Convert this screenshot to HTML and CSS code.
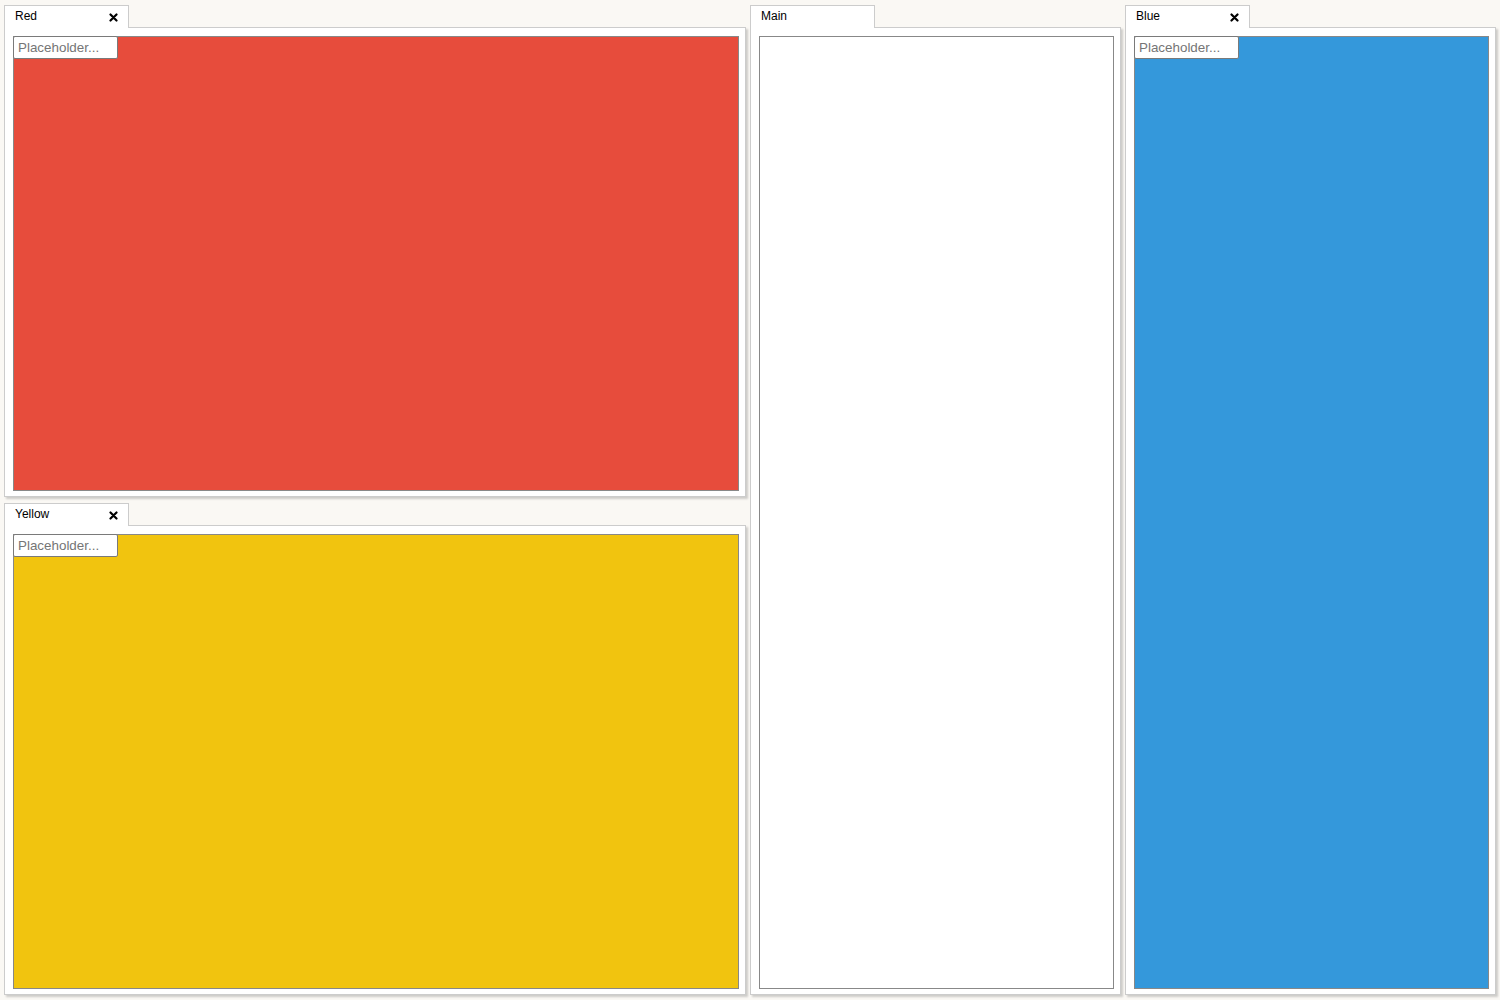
FILE: index.html
```html
<!DOCTYPE html>
<html>
<head>
<meta charset="utf-8">
<link rel="stylesheet" href="styles.css">
</head>
<body>
<div class="layout">
  <div class="col col-left">
    <div class="stack">
      <div class="tabs"><div class="tab"><span class="tab-title">Red</span><span class="close"><svg width="9" height="9" viewBox="0 0 9 9"><path d="M1.5 1.5L7.5 7.5M7.5 1.5L1.5 7.5" stroke="#000" stroke-width="2.2" stroke-linecap="round"/></svg></span></div></div>
      <div class="panel"><div class="box red"><input class="field" placeholder="Placeholder..."></div></div>
    </div>
    <div class="stack">
      <div class="tabs"><div class="tab"><span class="tab-title">Yellow</span><span class="close"><svg width="9" height="9" viewBox="0 0 9 9"><path d="M1.5 1.5L7.5 7.5M7.5 1.5L1.5 7.5" stroke="#000" stroke-width="2.2" stroke-linecap="round"/></svg></span></div></div>
      <div class="panel"><div class="box yellow"><input class="field" placeholder="Placeholder..."></div></div>
    </div>
  </div>
  <div class="col col-mid">
    <div class="stack">
      <div class="tabs"><div class="tab"><span class="tab-title">Main</span></div></div>
      <div class="panel"><div class="box white"></div></div>
    </div>
  </div>
  <div class="col col-right">
    <div class="stack">
      <div class="tabs"><div class="tab"><span class="tab-title">Blue</span><span class="close"><svg width="9" height="9" viewBox="0 0 9 9"><path d="M1.5 1.5L7.5 7.5M7.5 1.5L1.5 7.5" stroke="#000" stroke-width="2.2" stroke-linecap="round"/></svg></span></div></div>
      <div class="panel"><div class="box blue"><input class="field" placeholder="Placeholder..."></div></div>
    </div>
  </div>
</div>
</body>
</html>
```

FILE: styles.css
```css
* { box-sizing: border-box; }
html, body { margin: 0; padding: 0; background: #faf8f4; }
body { width: 1500px; height: 1000px; overflow: hidden; font-family: "Liberation Sans", Arial, sans-serif; }
.layout {
  display: flex;
  gap: 4px;
  padding: 5px 4px 0 4px;
  height: 1000px;
}
.col { display: flex; flex-direction: column; gap: 6px; }
.col-left { width: 742px; }
.col-mid { width: 371px; }
.col-right { width: 371px; }
.col-left .stack { height: 492px; }
.col-mid .stack, .col-right .stack { height: 990px; }
.stack { display: flex; flex-direction: column; }
.tabs { height: 22px; display: flex; position: relative; z-index: 1; }
.tab {
  width: 125px;
  height: 23px;
  background: #fff;
  border: 1px solid #cccccc;
  border-bottom: none;
  display: flex;
  align-items: flex-start;
  justify-content: space-between;
  padding: 3px 10px 0 10px;
  font-size: 12px;
  color: #000;
}
.tab-title { line-height: 14px; }
.close { display: flex; margin-top: 4px; }
.panel {
  flex: 1;
  background: #fff;
  border: 1px solid #cccccc;
  box-shadow: 2px 2px 2px rgba(0,0,0,0.18);
  padding: 8px 6px 5px 8px;
  display: flex;
}
.box {
  flex: 1;
  border: 1px solid #888;
}
.red { background: #e74c3c; }
.yellow { background: #f1c40f; }
.blue { background: #3498db; }
.white { background: #fff; }
.field {
  display: block;
  width: 105px;
  height: 23px;
  margin: -1px 0 0 -1px;
  border: 1px solid #7a7a7a;
  border-radius: 2px;
  background: #fff;
  font-family: "Liberation Sans", Arial, sans-serif;
  font-size: 13.4px;
  padding: 1px 4px;
  outline: none;
}
.field::placeholder { color: #757575; }
```
